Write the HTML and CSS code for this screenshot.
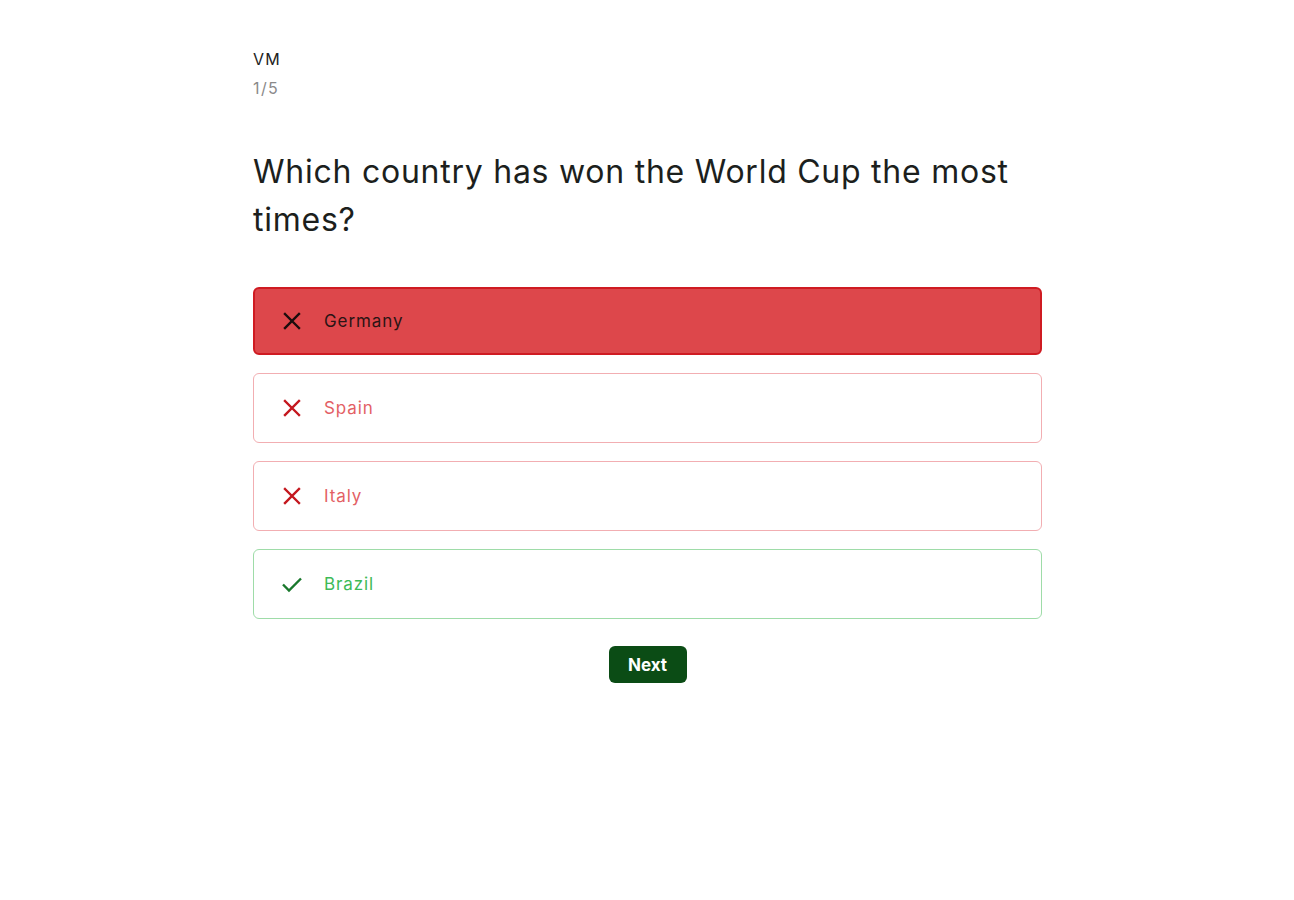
FILE: index.html
```html
<!DOCTYPE html>
<html lang="en">
<head>
<meta charset="utf-8">
<link rel="stylesheet" href="styles.css">
</head>
<body>
<main class="quiz">
  <header class="meta">
    <div class="title">VM</div>
    <div class="progress">1/5</div>
  </header>
  <h1 class="question">Which country has won the World Cup the most times?</h1>
  <ul class="options">
    <li class="option selected-wrong">
      <svg class="icon" viewBox="0 0 24 24"><path d="M5 5 L19 19 M19 5 L5 19"/></svg>
      <span>Germany</span>
    </li>
    <li class="option wrong">
      <svg class="icon" viewBox="0 0 24 24"><path d="M5 5 L19 19 M19 5 L5 19"/></svg>
      <span>Spain</span>
    </li>
    <li class="option wrong">
      <svg class="icon" viewBox="0 0 24 24"><path d="M5 5 L19 19 M19 5 L5 19"/></svg>
      <span>Italy</span>
    </li>
    <li class="option correct">
      <svg class="icon" viewBox="0 0 24 24"><path d="M3 12.5 L9 18.5 L21 6.5"/></svg>
      <span>Brazil</span>
    </li>
  </ul>
  <div class="actions">
    <button class="next">Next</button>
  </div>
</main>
</body>
</html>
```

FILE: styles.css
```css
* { box-sizing: border-box; }
html, body { margin: 0; padding: 0; background: #fff; }
body { font-family: Inter, "Noto Sans", sans-serif; color: #1c1f1d; }

.quiz {
  width: 789px;
  margin: 0 0 0 253px;
  padding-top: 48px;
}

.meta .title { font-size: 16px; line-height: 22px; color: #222; letter-spacing: 1.2px; }
.meta .progress { font-size: 16px; line-height: 22px; color: #8a8a8a; margin-top: 7px; letter-spacing: 1.4px; }

.question {
  font-size: 32px;
  font-weight: 400;
  line-height: 48px;
  margin: 49px 0 0 0;
  letter-spacing: 0.75px;
  color: #1c1f1d;
}

.options {
  list-style: none;
  padding: 0;
  margin: 43px 0 0 0;
  display: flex;
  flex-direction: column;
  gap: 18px;
}

.option {
  height: 70px;
  border: 1px solid;
  border-radius: 6px;
  display: flex;
  align-items: center;
  padding-left: 26px;
  gap: 20px;
  font-size: 17px;
  letter-spacing: 0.9px;
}

.icon { width: 24px; height: 24px; fill: none; stroke-width: 2.4; stroke-linecap: square; }

.selected-wrong { background: #dd474b; border-color: #cf1b22; color: #2a1414; border-width: 2px; height: 68px; padding-left: 25px; }
.selected-wrong .icon { stroke: #1b0d0d; }

.wrong { border-color: #f2aeb2; color: #e35f65; }
.wrong .icon { stroke: #c4171e; }

.correct { border-color: #9edca8; color: #3dba57; }
.correct .icon { stroke: #19782c; stroke-linecap: butt; }

.actions { display: flex; justify-content: center; margin-top: 27px; }

.next {
  font-family: Inter, "Noto Sans", sans-serif;
  background: #0b4c15;
  color: #fff;
  border: none;
  border-radius: 6px;
  height: 37px;
  width: 78px;
  font-size: 17px;
  font-weight: 700;
  cursor: pointer;
}
```
